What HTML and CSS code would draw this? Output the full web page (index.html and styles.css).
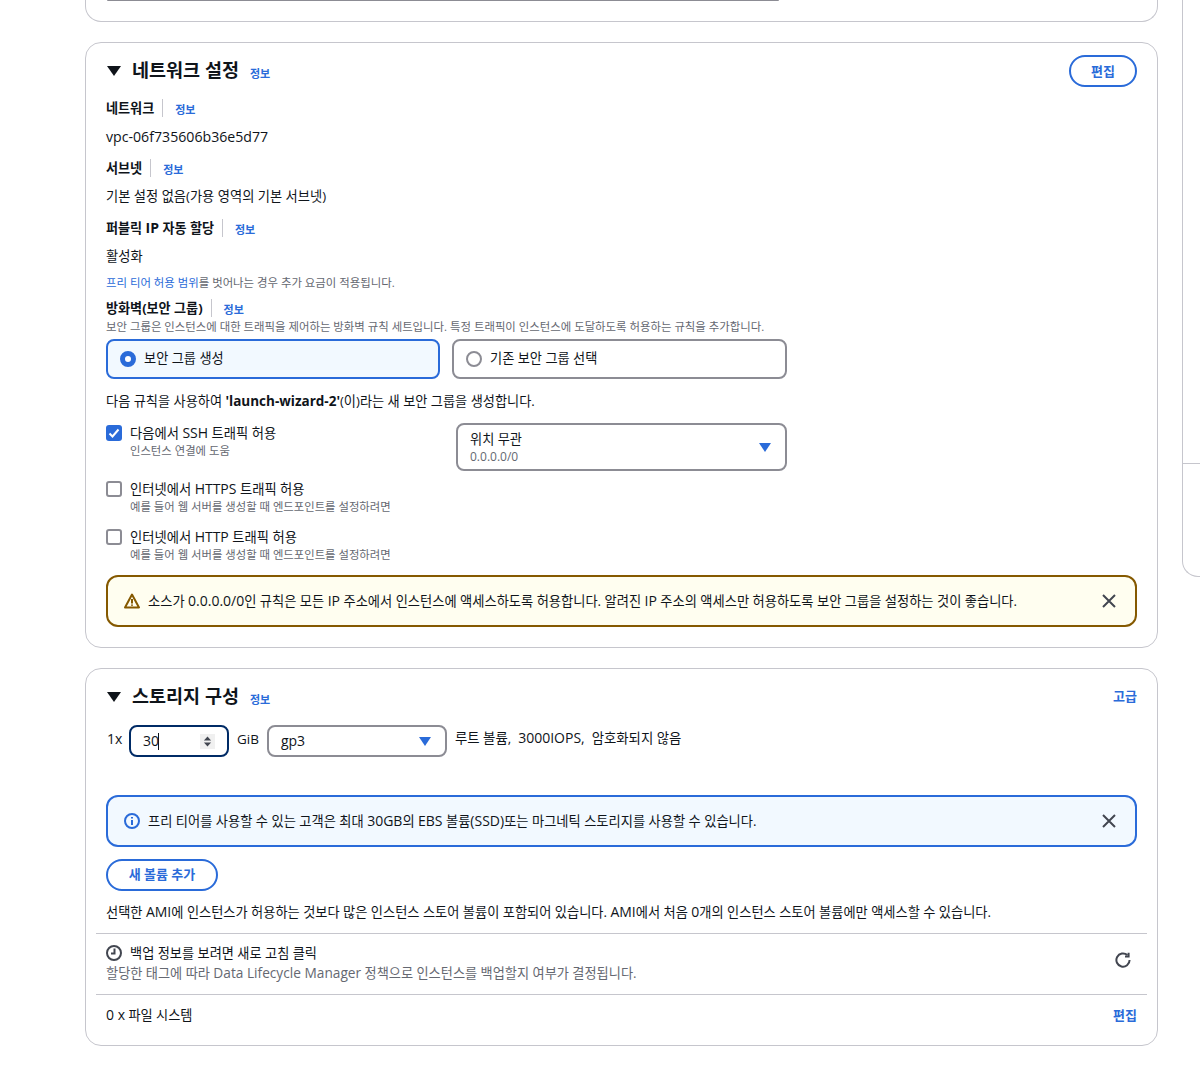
FILE: index.html
```html
<!DOCTYPE html>
<html lang="ko">
<head>
<meta charset="utf-8">
<title>인스턴스 시작</title>
<link rel="stylesheet" href="styles.css">
</head>
<body>
<div class="page">
  <main class="main">
    <section class="card card-cut">
      <div class="cut-bar"></div>
    </section>

    <section class="card">
      <div class="head">
        <svg class="caret" viewBox="0 0 14 10"><path d="M0 0h14L7 10z"/></svg>
        <h2>네트워크 설정</h2>
        <a class="info head-info">정보</a>
        <button class="pill edit-btn">편집</button>
      </div>

      <div class="label l-net"><span class="label-text">네트워크</span><a class="info">정보</a></div>
      <div class="value v-net"><span class="vpc">vpc-06f735606b36e5d77</span></div>
      <div class="label l-sub"><span class="label-text">서브넷</span><a class="info">정보</a></div>
      <div class="value v-sub">기본 설정 없음(가용 영역의 기본 서브넷)</div>
      <div class="label l-ip"><span class="label-text">퍼블릭 <span class="lat">IP</span> 자동 할당</span><a class="info">정보</a></div>
      <div class="value v-sub">활성화</div>
      <div class="small free"><a class="link">프리 티어 허용 범위</a>를 벗어나는 경우 추가 요금이 적용됩니다.</div>
      <div class="label l-fw"><span class="label-text">방화벽(보안 그룹)</span><a class="info">정보</a></div>
      <div class="small desc">보안 그룹은 인스턴스에 대한 트래픽을 제어하는 방화벽 규칙 세트입니다. 특정 트래픽이 인스턴스에 도달하도록 허용하는 규칙을 추가합니다.</div>

      <div class="tiles">
        <div class="tile tile-on"><span class="radio radio-on"></span>보안 그룹 생성</div>
        <div class="tile"><span class="radio"></span>기존 보안 그룹 선택</div>
      </div>

      <div class="rule-note">다음 규칙을 사용하여 <b class="wizard">'launch-wizard-2'</b>(이)라는 새 보안 그룹을 생성합니다.</div>

      <div class="rule rule-first">
        <div class="rule-left">
          <span class="check check-on"><svg viewBox="0 0 16 16"><path d="M3.5 8.5l3 3 6-7"/></svg></span>
          <div class="rule-body">
            <div class="rule-title">다음에서 <span class="lat">SSH</span> 트래픽 허용</div>
            <div class="rule-sub">인스턴스 연결에 도움</div>
          </div>
        </div>
        <div class="select source">
          <div>
            <div class="source-title">위치 무관</div>
            <div class="source-sub">0.0.0.0/0</div>
          </div>
          <svg class="sel-caret" viewBox="0 0 12 9"><path d="M0 0h12L6 9z"/></svg>
        </div>
      </div>
      <div class="rule rule-second">
        <div class="rule-left">
          <span class="check"></span>
          <div class="rule-body">
            <div class="rule-title">인터넷에서 <span class="lat">HTTPS</span> 트래픽 허용</div>
            <div class="rule-sub">예를 들어 웹 서버를 생성할 때 엔드포인트를 설정하려면</div>
          </div>
        </div>
      </div>
      <div class="rule rule-third">
        <div class="rule-left">
          <span class="check"></span>
          <div class="rule-body">
            <div class="rule-title">인터넷에서 <span class="lat">HTTP</span> 트래픽 허용</div>
            <div class="rule-sub">예를 들어 웹 서버를 생성할 때 엔드포인트를 설정하려면</div>
          </div>
        </div>
      </div>

      <div class="alert alert-warn">
        <svg class="alert-icon" viewBox="0 0 16 16"><path class="warn-line" d="M8 1.6L15 14.4H1z"/><path class="warn-line" d="M8 6v4.4M8 11.6v1.2"/></svg>
        <span class="alert-text">소스가 <span class="lat">0.0.0.0/0</span>인 규칙은 모든 <span class="lat">IP</span> 주소에서 인스턴스에 액세스하도록 허용합니다. 알려진 <span class="lat">IP</span> 주소의 액세스만 허용하도록 보안 그룹을 설정하는 것이 좋습니다.</span>
        <svg class="close" viewBox="0 0 14 14"><path d="M1 1l12 12M13 1L1 13"/></svg>
      </div>
    </section>

    <section class="card">
      <div class="head">
        <svg class="caret" viewBox="0 0 14 10"><path d="M0 0h14L7 10z"/></svg>
        <h2>스토리지 구성</h2>
        <a class="info head-info">정보</a>
        <a class="link strong push">고급</a>
      </div>

      <div class="vol-row">
        <span class="vol-x lat">1x</span>
        <div class="num-input"><span class="num-val">30</span><span class="caret-bar"></span>
          <span class="spin"><svg viewBox="0 0 10 14"><path d="M5 1.5L9 6H1zM5 12.5L1 8h8z"/></svg></span>
        </div>
        <span class="vol-unit lat">GiB</span>
        <div class="select vol-type">gp3<svg class="sel-caret" viewBox="0 0 12 9"><path d="M0 0h12L6 9z"/></svg></div>
        <span class="vol-note">루트 볼륨,&nbsp; <span class="lat">3000IOPS,</span>&nbsp; 암호화되지 않음</span>
      </div>

      <div class="alert alert-info">
        <svg class="alert-icon" viewBox="0 0 16 16"><circle class="info-line" cx="8" cy="8" r="7"/><path class="info-line" d="M8 7v5M8 4v1.6"/></svg>
        <span class="alert-text">프리 티어를 사용할 수 있는 고객은 최대 <span class="lat">30GB</span>의 <span class="lat">EBS</span> 볼륨<span class="lat">(SSD)</span>또는 마그네틱 스토리지를 사용할 수 있습니다.</span>
        <svg class="close" viewBox="0 0 14 14"><path d="M1 1l12 12M13 1L1 13"/></svg>
      </div>

      <button class="pill add-btn">새 볼륨 추가</button>
      <div class="ami-note">선택한 <span class="lat">AMI</span>에 인스턴스가 허용하는 것보다 많은 인스턴스 스토어 볼륨이 포함되어 있습니다. <span class="lat">AMI</span>에서 처음 <span class="lat">0</span>개의 인스턴스 스토어 볼륨에만 액세스할 수 있습니다.</div>

      <div class="band band-backup">
        <div>
          <div class="backup-title">
            <svg class="clock" viewBox="0 0 16 16"><circle cx="8" cy="8" r="7"/><path d="M8.5 3.5v5H5"/></svg>
            백업 정보를 보려면 새로 고침 클릭
          </div>
          <div class="backup-sub">할당한 태그에 따라 <span class="dlm">Data Lifecycle Manager</span> 정책으로 인스턴스를 백업할지 여부가 결정됩니다.</div>
        </div>
        <svg class="refresh" viewBox="0 0 16 16"><path d="M14.6 8A6.6 6.6 0 1 1 12.4 3.1"/><path d="M13.6 0.8v3.6H10"/></svg>
      </div>
      <div class="band band-fs">
        <span><span class="lat">0 x</span> 파일 시스템</span>
        <a class="link strong">편집</a>
      </div>
    </section>
  </main>

  <aside class="side">
    <div class="side-rule"></div>
  </aside>
</div>
</body>
</html>
```

FILE: styles.css
```css
* { box-sizing: border-box; }

html, body {
  margin: 0;
  background: #fff;
}

body {
  height: 1066px;
  overflow: hidden;
  font-family: "Open Sans", "Noto Sans CJK KR", sans-serif;
  font-size: 13.2px;
  line-height: 22px;
  color: #0f141a;
}

.lat { font-size: 14px; }
.vpc { font-size: 14.15px; }
.wizard { font-size: 13.5px; }
.dlm { font-size: 13.7px; }

.page {
  display: flex;
  align-items: flex-start;
  gap: 24px;
  padding-left: 85px;
}

.main {
  flex: 0 0 1073px;
  display: flex;
  flex-direction: column;
  gap: 20px;
}

.card {
  border: 1px solid #c6c6cd;
  border-radius: 16px;
  padding: 13px 20px 20px;
  background: #fff;
}

.card-cut {
  height: 22px;
  padding: 0 378px 0 21px;
  border-top: 0;
  border-radius: 0 0 16px 16px;
}

.cut-bar {
  height: 1px;
  background: #8c8c94;
  border-radius: 0 0 8px 8px;
}

.side {
  flex: 1;
  height: 577px;
  border: 1px solid #c6c6cd;
  border-top: 0;
  border-right: 0;
  border-radius: 0 0 0 16px;
}

.side-rule {
  margin-top: 463px;
  height: 1px;
  background: #c6c6cd;
}

/* headings */
.head {
  display: flex;
  align-items: center;
  height: 28px;
}

.caret {
  width: 14px;
  height: 10px;
  margin: 2px 11px 0 1px;
  fill: #0f141a;
}

h2 {
  margin: 0;
  font-size: 18.5px;
  line-height: 28px;
  font-weight: 700;
}

.info {
  font-size: 11px;
  line-height: 16px;
  font-weight: 700;
  color: #2a6bd9;
  margin-top: 4px;
}

.head-info { margin: 8px 0 0 11px; }

.pill {
  font: inherit;
  font-weight: 700;
  color: #2a6bd9;
  background: #fff;
  border: 2px solid #2a6bd9;
  border-radius: 16px;
  height: 32px;
  padding: 0;
}

.edit-btn {
  width: 68px;
  margin: 2px 0 0 auto;
  font-size: 13px;
}

.link { color: #2a6bd9; }
.strong { font-weight: 700; font-size: 13px; }
.push { margin-left: auto; }

/* fields */
.label {
  display: flex;
  align-items: center;
  height: 22px;
}

.label-text {
  font-size: 13.1px;
  font-weight: 700;
  padding-right: 8px;
  border-right: 1px solid #c6c6cd;
  height: 18px;
  line-height: 18px;
  margin-right: 12px;
}

.l-net { margin-top: 13px; }
.l-sub { margin-top: 9px; }
.l-ip { margin-top: 10px; }
.l-fw { margin-top: 6px; }
.v-net { margin-top: 7px; }
.v-sub { margin-top: 6px; font-size: 13.25px; }

.small {
  font-size: 11.4px;
  color: #656871;
}

.free {
  margin-top: 8px;
  line-height: 16px;
}

.desc {
  padding-top: 1px;
  line-height: 14px;
}

/* tiles */
.tiles {
  display: flex;
  gap: 12px;
  margin-top: 5px;
}

.tile {
  width: 335px;
  height: 40px;
  display: flex;
  align-items: center;
  gap: 8px;
  padding: 0 12px 2px;
  border: 2px solid #8c8c94;
  border-radius: 8px;
}

.tile-on {
  width: 334px;
  border-color: #2a6bd9;
  background: #f2f9ff;
}

.radio {
  width: 16px;
  height: 16px;
  flex: none;
  margin-top: 2px;
  border: 2px solid #8c8c94;
  border-radius: 50%;
  background: #fff;
}

.radio-on {
  border: 5px solid #2a6bd9;
}

.rule-note {
  margin-top: 11px;
}

/* rules */
.rule {
  display: flex;
  align-items: flex-start;
}

.rule-first { margin-top: 9px; }
.rule-second { margin-top: 6px; }
.rule-third { margin-top: 11px; }

.rule-left {
  flex: 0 0 350px;
  display: flex;
  gap: 8px;
}

.rule-body { padding-top: 1px; }

.rule-title { font-size: 13.3px; }

.check {
  width: 16px;
  height: 16px;
  flex: none;
  margin-top: 4px;
  border: 2px solid #8c8c94;
  border-radius: 3px;
  background: #fff;
}

.check-on {
  border: 0;
  background: #2a6bd9;
}

.check-on svg {
  display: block;
  fill: none;
  stroke: #fff;
  stroke-width: 2;
}

.rule-sub {
  font-size: 11.35px;
  line-height: 14px;
  color: #656871;
}

.select {
  display: flex;
  align-items: center;
  justify-content: space-between;
  border: 2px solid #8c8c94;
  border-radius: 8px;
  background: #fff;
}

.source {
  width: 331px;
  height: 48px;
  margin-top: 2px;
  padding: 0 14px 0 12px;
}

.source-title {
  line-height: 20px;
}

.source-sub {
  font-size: 12px;
  line-height: 16px;
  color: #656871;
}

.sel-caret {
  width: 12px;
  height: 9px;
  fill: #2a6bd9;
}

/* alerts */
.alert {
  display: flex;
  align-items: center;
  height: 52px;
  padding: 0 19px 0 16px;
  border: 2px solid;
  border-radius: 12px;
}

.alert-warn {
  margin-top: 13px;
  border-color: #855900;
  background: #fffef0;
}

.alert-info {
  margin-top: 38px;
  border-color: #2a6bd9;
  background: #f2f9ff;
}

.alert-icon {
  width: 16px;
  height: 16px;
  flex: none;
  margin-right: 8px;
  fill: none;
  stroke-width: 2;
}

.warn-line {
  stroke: #855900;
  stroke-linejoin: round;
}

.info-line { stroke: #2a6bd9; }

.alert-text {
  flex: 1;
  font-size: 13.25px;
}

.close {
  width: 14px;
  height: 14px;
  flex: none;
  fill: none;
  stroke: #424650;
  stroke-width: 2;
}

/* volume */
.vol-row {
  display: flex;
  align-items: flex-start;
  height: 32px;
  margin-top: 15px;
}

.vol-x { margin: 3px 0 0 1px; width: 22px; }

.num-input {
  width: 100px;
  height: 32px;
  display: flex;
  align-items: center;
  padding-left: 12px;
  border: 2px solid #002b66;
  border-radius: 8px;
}

.num-val { font-size: 14px; }

.caret-bar {
  width: 1px;
  height: 17px;
  margin-left: -1px;
  background: #0f141a;
}

.spin {
  width: 15px;
  height: 15px;
  margin-left: auto;
  margin-right: 12px;
  background: #f0f0f0;
  display: flex;
  align-items: center;
  justify-content: center;
}

.spin svg {
  width: 9px;
  height: 13px;
  fill: #424650;
}

.vol-unit { margin: 3px 8px 0; font-size: 13.5px; }

.vol-type {
  width: 180px;
  height: 32px;
  padding: 0 14px 0 12px;
  font-size: 14px;
}

.vol-note { margin: 2px 0 0 8px; font-size: 13.4px; }

.add-btn {
  display: block;
  width: 112px;
  margin-top: 12px;
  padding-bottom: 2px;
  font-size: 13px;
}

.ami-note {
  margin-top: 10px;
  font-size: 13.23px;
}

/* bands */
.band {
  margin: 0 -10px;
  padding: 0 10px;
  border-top: 1px solid #c6c6cd;
  display: flex;
  align-items: center;
  justify-content: space-between;
}

.band-backup {
  margin-top: 10px;
  height: 61px;
  padding-bottom: 4px;
}

.band-fs {
  height: 41px;
  margin-bottom: -10px;
}

.backup-title {
  display: flex;
  align-items: center;
  gap: 8px;
}

.backup-sub {
  color: #656871;
  line-height: 18px;
}

.clock {
  width: 16px;
  height: 16px;
  fill: none;
  stroke: #424650;
  stroke-width: 2;
}

.refresh {
  width: 16px;
  height: 16px;
  flex: none;
  margin: 0 6px 4px 0;
  fill: none;
  stroke: #424650;
  stroke-width: 2;
}
```
